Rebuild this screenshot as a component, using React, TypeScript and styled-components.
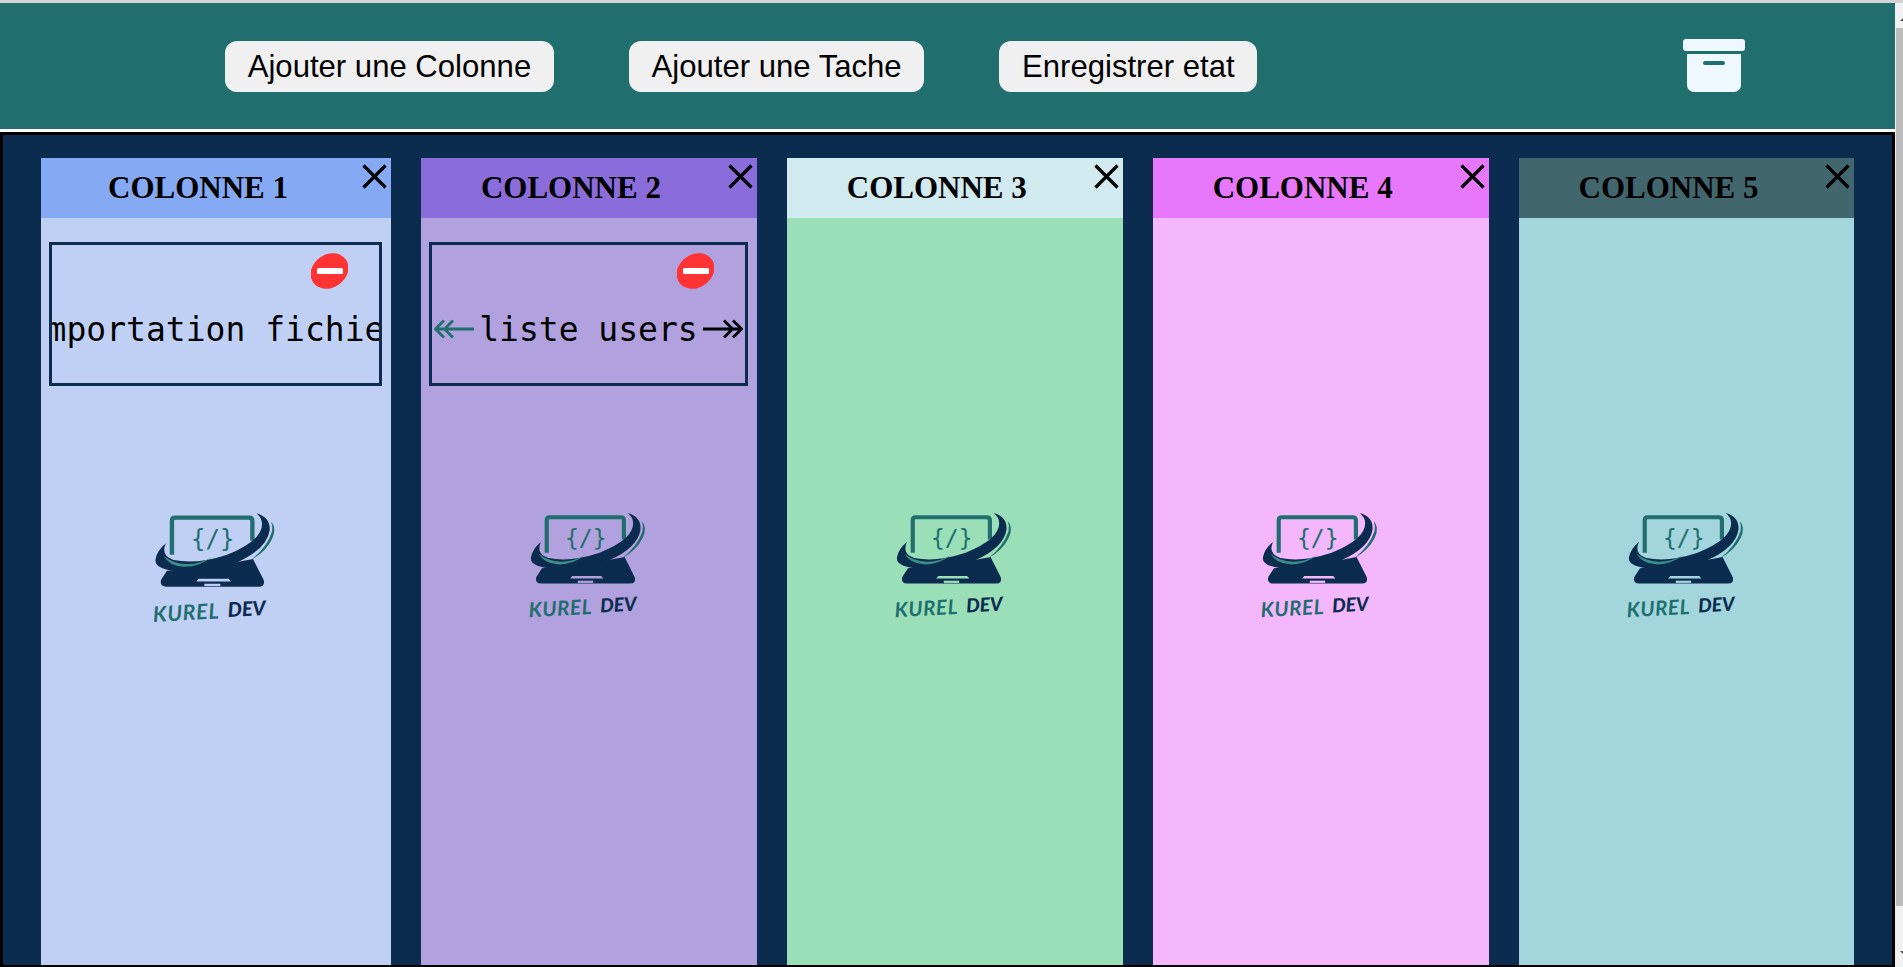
import * as React from "react";
import styled, { createGlobalStyle } from "styled-components";

const GlobalStyle = createGlobalStyle`
  html, body {
    margin: 0;
    height: 100%;
    overflow: hidden;
    background: #ffffff;
  }
`;

const NAVY = "#0b2c4f";
const TEAL = "#216e6f";

const Page = styled.div`
  width: 1903px;
  height: 967px;
  display: flex;
  flex-direction: column;
  overflow: hidden;
`;

const TopEdge = styled.div`
  height: 3px;
  flex: none;
  background: #d4d4d4;
`;

const Viewport = styled.div`
  flex: 1;
  min-height: 0;
  display: flex;
`;

const Main = styled.main`
  flex: 1;
  min-width: 0;
  display: flex;
  flex-direction: column;
`;

const Toolbar = styled.header`
  height: 129px;
  flex: none;
  box-sizing: border-box;
  padding: 38px 0 0 225px;
  background: ${TEAL};
  border-bottom: 3px solid #ffffff;
  display: flex;
  align-items: flex-start;
  gap: 75px;
`;

const ToolButton = styled.button`
  height: 51px;
  padding: 0 22.7px;
  border: none;
  border-radius: 12px;
  background: #f0f0f0;
  color: #000000;
  font-family: "Liberation Sans", Arial, sans-serif;
  font-size: 31.1px;
  white-space: nowrap;
`;

const ArchiveButton = styled.button`
  width: 62px;
  height: 53px;
  margin: -2px 0 0 351px;
  padding: 0;
  border: none;
  background: none;
`;

const Board = styled.section`
  flex: 1;
  min-height: 0;
  box-sizing: border-box;
  border: 3px solid #000000;
  border-bottom-width: 2px;
  padding: 23px 37.6px 0 38px;
  background: ${NAVY};
  display: flex;
  gap: 30px;
`;

const Column = styled.article<{ $wide?: boolean }>`
  flex: ${(props) => (props.$wide ? "none" : "1")};
  width: ${(props) => (props.$wide ? "350px" : "auto")};
  min-width: 0;
  display: flex;
  flex-direction: column;
`;

const ColumnHead = styled.div<{ $color: string }>`
  height: 60px;
  flex: none;
  background: ${(props) => props.$color};
  display: flex;
`;

const ColumnTitle = styled.h2`
  flex: 1;
  margin: 0;
  text-align: center;
  line-height: 60px;
  color: #000000;
  font-family: "Liberation Serif", "Times New Roman", serif;
  font-size: 31px;
  font-weight: 700;
`;

const CloseButton = styled.button`
  width: 36px;
  height: 36px;
  flex: none;
  box-sizing: border-box;
  padding: 6px 4px 5px 7px;
  border: none;
  background: none;
  display: block;
`;

const ColumnBody = styled.div<{ $color: string }>`
  flex: 1;
  position: relative;
  box-sizing: border-box;
  padding: 24px 9px 0 8px;
  background: ${(props) => props.$color};
`;

const Watermark = styled.div`
  position: absolute;
  top: 290px;
  left: 50%;
  width: 41%;
  transform: translateX(-50%);
`;

const TaskCard = styled.div`
  position: relative;
  height: 144px;
  box-sizing: border-box;
  padding-top: 30px;
  border: 3px solid ${NAVY};
  overflow: hidden;
  display: flex;
  align-items: center;
  justify-content: center;
  gap: 5px;
`;

const TaskLabel = styled.span`
  flex: none;
  color: #000000;
  font-family: "DejaVu Sans Mono", "Liberation Mono", monospace;
  font-size: 33px;
  white-space: nowrap;
`;

const MoveArrow = styled.svg`
  width: 40px;
  height: 20px;
  flex: none;
`;

const RemoveBadge = styled.svg`
  position: absolute;
  top: 8px;
  right: 31px;
  width: 37px;
  height: 36px;
`;

const ScrollBar = styled.aside`
  width: 8px;
  flex: none;
  display: flex;
  flex-direction: column;
  background: #f1f1f1;
`;

const ScrollCap = styled.div<{ $down?: boolean }>`
  position: relative;
  height: 25px;
  flex: none;
  overflow: hidden;

  &::after {
    content: "";
    position: absolute;
    left: 5px;
    top: ${(props) => (props.$down ? "9px" : "14px")};
    border-left: 4px solid transparent;
    border-right: 4px solid transparent;
    border-top: ${(props) => (props.$down ? "4px solid #505050" : "none")};
    border-bottom: ${(props) => (props.$down ? "none" : "4px solid #505050")};
  }
`;

const ScrollThumb = styled.div`
  height: 878px;
  flex: none;
  margin-left: 1px;
  background: #bcbcbc;
`;

const ScrollTrack = styled.div`
  flex: 1;
`;

const ArchiveIcon = () => (
  <svg width="62" height="53" viewBox="0 0 62 53" aria-hidden="true">
    <rect x="0" y="0" width="62" height="12" rx="3" fill="#f0f8ff" />
    <path
      d="M4 15H58V46A7 7 0 0 1 51 53H11A7 7 0 0 1 4 46Z"
      fill="#f0f8ff"
    />
    <rect x="20" y="22" width="22" height="4" rx="2" fill={TEAL} />
  </svg>
);

const CloseIcon = () => (
  <svg width="25" height="25" viewBox="0 0 25 25" aria-hidden="true">
    <path d="M1.5 1.5L23.5 23.5M23.5 1.5L1.5 23.5" stroke="#000" strokeWidth="3.2" />
  </svg>
);

const RemoveIcon = () => (
  <RemoveBadge viewBox="0 0 37 36" aria-hidden="true">
    <ellipse
      cx="18.5"
      cy="18"
      rx="20"
      ry="16.5"
      transform="rotate(-35 18.5 18)"
      fill="#ff3333"
    />
    <rect x="6" y="15" width="26" height="6" rx="1.5" fill="#ffffff" />
  </RemoveBadge>
);

const ArrowLeft = () => (
  <MoveArrow viewBox="0 0 40 20" aria-hidden="true">
    <path
      d="M40 10H1.5M10 1.5L1.5 10L10 18.5M19 1.5L10.5 10L19 18.5"
      fill="none"
      stroke={TEAL}
      strokeWidth="2.8"
    />
  </MoveArrow>
);

const ArrowRight = () => (
  <MoveArrow viewBox="0 0 40 20" aria-hidden="true">
    <path
      d="M0 10H38.5M30 1.5L38.5 10L30 18.5M21 1.5L29.5 10L21 18.5"
      fill="none"
      stroke="#000"
      strokeWidth="2.8"
    />
  </MoveArrow>
);

const KurelLogo = ({ notch }: { notch: string }) => (
  <svg viewBox="42 52 430 370" width="100%" display="block" aria-hidden="true">
    <path
      d="M125 192V90Q125 81 134 81H356Q366 81 366 90V150"
      fill="none"
      stroke={TEAL}
      strokeWidth="13"
    />
    <text
      x="247"
      y="170"
      textAnchor="middle"
      fontFamily="'DejaVu Sans Mono', monospace"
      fontSize="72"
      fill={TEAL}
    >
      {"{/}"}
    </text>
    <path
      d="M110 240L92 268Q88 288 108 288H385Q405 288 400 268L368 205L260 225Z"
      fill={NAVY}
    />
    <path
      d="M378 68Q420 80 418 118Q410 175 320 215Q230 245 130 240Q70 232 76 205Q80 180 107 158Q90 195 130 208Q200 222 290 192Q395 150 395 100Q395 82 378 68Z"
      fill={NAVY}
    />
    <path
      d="M422 93Q440 110 425 145Q405 185 362 208Q410 170 424 125Q428 108 422 93Z"
      fill={TEAL}
    />
    <path
      d="M100 194Q125 218 170 220Q210 220 246 198Q205 230 160 228Q115 225 100 194Z"
      fill="#3b8f88"
    />
    <path d="M205 264H295L302 272H198Z" fill={notch} />
    <rect x="222" y="279" width="48" height="7" fill={notch} />
    <g transform="rotate(-3 170 365)">
      <text
        x="68"
        y="388"
        fontFamily="Lato, 'Open Sans', sans-serif"
        fontStyle="italic"
        fontWeight="700"
        fontSize="64"
        letterSpacing="2"
        fill={TEAL}
      >
        KUREL
      </text>
      <text
        x="292"
        y="385"
        fontFamily="Lato, 'Open Sans', sans-serif"
        fontStyle="italic"
        fontWeight="900"
        fontSize="60"
        fill={NAVY}
      >
        DEV
      </text>
    </g>
  </svg>
);

interface ColumnData {
  title: string;
  head: string;
  body: string;
  wide?: boolean;
  task?: string;
  arrows?: boolean;
}

const columns: ColumnData[] = [
  { title: "COLONNE 1", head: "#85aaf3", body: "#c0d0f5", wide: true, task: "Importation fichier" },
  { title: "COLONNE 2", head: "#8a6ddb", body: "#b1a1de", task: "liste users", arrows: true },
  { title: "COLONNE 3", head: "#d0eaf0", body: "#9bdfb8" },
  { title: "COLONNE 4", head: "#e878fb", body: "#f5b7fc" },
  { title: "COLONNE 5", head: "#42666d", body: "#a2d6dc" },
];

export default function App() {
  return (
    <Page>
      <GlobalStyle />
      <TopEdge />
      <Viewport>
        <Main>
          <Toolbar>
            <ToolButton>Ajouter une Colonne</ToolButton>
            <ToolButton>Ajouter une Tache</ToolButton>
            <ToolButton>Enregistrer etat</ToolButton>
            <ArchiveButton aria-label="Archives">
              <ArchiveIcon />
            </ArchiveButton>
          </Toolbar>
          <Board>
            {columns.map((col) => (
              <Column key={col.title} $wide={col.wide}>
                <ColumnHead $color={col.head}>
                  <ColumnTitle>{col.title}</ColumnTitle>
                  <CloseButton aria-label="Supprimer la colonne">
                    <CloseIcon />
                  </CloseButton>
                </ColumnHead>
                <ColumnBody $color={col.body}>
                  <Watermark>
                    <KurelLogo notch={col.body} />
                  </Watermark>
                  {col.task && (
                    <TaskCard>
                      <RemoveIcon />
                      {col.arrows && <ArrowLeft />}
                      <TaskLabel>{col.task}</TaskLabel>
                      {col.arrows && <ArrowRight />}
                    </TaskCard>
                  )}
                </ColumnBody>
              </Column>
            ))}
          </Board>
        </Main>
        <ScrollBar>
          <ScrollCap />
          <ScrollThumb />
          <ScrollTrack />
          <ScrollCap $down />
        </ScrollBar>
      </Viewport>
    </Page>
  );
}
